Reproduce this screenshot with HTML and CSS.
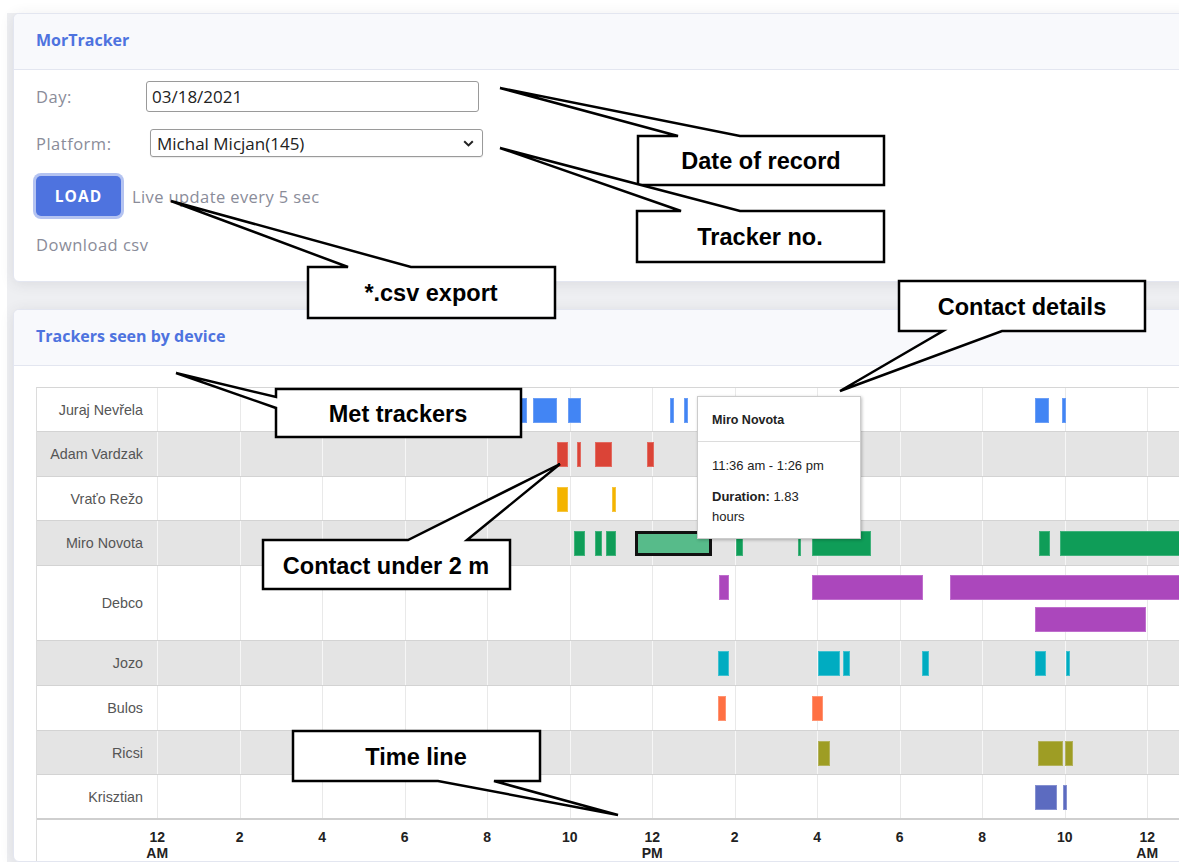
FILE: index.html
```html
<!DOCTYPE html>
<html lang="en">
<head>
<meta charset="utf-8">
<title>MorTracker</title>
<link rel="stylesheet" href="styles.css">
</head>
<body>
<div class="page">
  <section class="card">
    <header class="card-head"><h6 class="card-title">MorTracker</h6></header>
    <div class="card-body form">
      <div class="field">
        <label class="field-label">Day:</label>
        <div class="date-input">03/18/2021</div>
      </div>
      <div class="field">
        <label class="field-label">Platform:</label>
        <div class="select">
          <span>Michal Micjan(145)</span>
          <svg class="chevron" width="11" height="7" viewBox="0 0 11 7"><polyline points="1.2,1.2 5.5,5.4 9.8,1.2" fill="none" stroke="#222" stroke-width="2"/></svg>
        </div>
      </div>
      <div class="actions">
        <button class="btn-load">LOAD</button>
        <span class="hint">Live update every 5 sec</span>
      </div>
      <a class="download">Download csv</a>
    </div>
  </section>

  <section class="card">
    <header class="card-head"><h6 class="card-title">Trackers seen by device</h6></header>
    <div class="card-body chart-body">
      <div class="timeline">
        <div class="row short">
          <div class="lbl">Juraj Nevřela</div>
          <div class="track c-blue">
            <i class="bar" style="left:358px;width:12px"></i>
            <i class="bar" style="left:376px;width:24px"></i>
            <i class="bar" style="left:411px;width:13px"></i>
            <i class="bar" style="left:513px;width:4px"></i>
            <i class="bar" style="left:527px;width:4px"></i>
            <i class="bar" style="left:878px;width:14px"></i>
            <i class="bar" style="left:905px;width:4px"></i>
          </div>
        </div>
        <div class="row alt">
          <div class="lbl">Adam Vardzak</div>
          <div class="track c-red">
            <i class="bar" style="left:400px;width:11px"></i>
            <i class="bar" style="left:420px;width:4px"></i>
            <i class="bar" style="left:438px;width:17px"></i>
            <i class="bar" style="left:490px;width:7px"></i>
          </div>
        </div>
        <div class="row short">
          <div class="lbl">Vraťo Režo</div>
          <div class="track c-yellow">
            <i class="bar" style="left:400px;width:11px"></i>
            <i class="bar" style="left:455px;width:4px"></i>
          </div>
        </div>
        <div class="row alt">
          <div class="lbl">Miro Novota</div>
          <div class="track c-green">
            <i class="bar" style="left:417px;width:11px"></i>
            <i class="bar" style="left:438px;width:7px"></i>
            <i class="bar" style="left:449px;width:10px"></i>
            <i class="bar selected" style="left:478px;width:77px"></i>
            <i class="bar" style="left:579px;width:7px"></i>
            <i class="bar" style="left:641px;width:3px"></i>
            <i class="bar" style="left:655px;width:59px"></i>
            <i class="bar" style="left:882px;width:11px"></i>
            <i class="bar" style="left:903px;width:160px"></i>
          </div>
        </div>
        <div class="row tall">
          <div class="lbl">Debco</div>
          <div class="track c-purple">
            <i class="bar lane1" style="left:562px;width:10px"></i>
            <i class="bar lane1" style="left:655px;width:111px"></i>
            <i class="bar lane1" style="left:793px;width:260px"></i>
            <i class="bar lane2" style="left:878px;width:111px"></i>
          </div>
        </div>
        <div class="row alt">
          <div class="lbl">Jozo</div>
          <div class="track c-teal">
            <i class="bar" style="left:561px;width:11px"></i>
            <i class="bar" style="left:661px;width:22px"></i>
            <i class="bar" style="left:686px;width:7px"></i>
            <i class="bar" style="left:765px;width:7px"></i>
            <i class="bar" style="left:878px;width:11px"></i>
            <i class="bar" style="left:909px;width:4px"></i>
          </div>
        </div>
        <div class="row">
          <div class="lbl">Bulos</div>
          <div class="track c-orange">
            <i class="bar" style="left:561px;width:8px"></i>
            <i class="bar" style="left:655px;width:11px"></i>
          </div>
        </div>
        <div class="row alt short">
          <div class="lbl">Ricsi</div>
          <div class="track c-olive">
            <i class="bar" style="left:661px;width:12px"></i>
            <i class="bar" style="left:881px;width:25px"></i>
            <i class="bar" style="left:908px;width:8px"></i>
          </div>
        </div>
        <div class="row last">
          <div class="lbl">Krisztian</div>
          <div class="track c-indigo">
            <i class="bar" style="left:878px;width:22px"></i>
            <i class="bar" style="left:906px;width:4px"></i>
          </div>
        </div>

        <div class="axis">
          <span class="tick">12<br>AM</span>
          <span class="tick">2</span>
          <span class="tick">4</span>
          <span class="tick">6</span>
          <span class="tick">8</span>
          <span class="tick">10</span>
          <span class="tick">12<br>PM</span>
          <span class="tick">2</span>
          <span class="tick">4</span>
          <span class="tick">6</span>
          <span class="tick">8</span>
          <span class="tick">10</span>
          <span class="tick">12<br>AM</span>
        </div>

        <div class="tooltip">
          <div class="tip-head">Miro Novota</div>
          <div class="tip-body">
            <p class="tip-time">11:36 am - 1:26 pm</p>
            <p class="tip-dur"><b>Duration:</b> 1.83 hours</p>
          </div>
        </div>
      </div>
    </div>
  </section>
</div>

<svg class="callouts" width="1179" height="862" viewBox="0 0 1179 862">
  <g class="callout">
    <path d="M678,136 L500,88 L740,136 L884,136 L884,185 L638,185 L638,136 Z"/>
    <text x="761" y="161">Date of record</text>
  </g>
  <g class="callout">
    <path d="M681,211 L500,148 L740,211 L884,211 L884,262 L637,262 L637,211 Z"/>
    <text x="760" y="237">Tracker no.</text>
  </g>
  <g class="callout">
    <path d="M348,267 L171,201 L411,267 L555,267 L555,318 L308,318 L308,267 Z"/>
    <text x="431" y="293">*.csv export</text>
  </g>
  <g class="callout">
    <path d="M899,281 L1145,281 L1145,331 L1002,331 L840,391 L943,331 L899,331 Z"/>
    <text x="1022" y="307">Contact details</text>
  </g>
  <g class="callout">
    <path d="M276,389 L521,389 L521,437 L276,437 L276,408 L176,373 L276,397 Z"/>
    <text x="398" y="414">Met trackers</text>
  </g>
  <g class="callout">
    <path d="M263,540 L408,540 L560,464 L467,540 L510,540 L510,589 L263,589 Z"/>
    <text x="386" y="566">Contact under 2 m</text>
  </g>
  <g class="callout">
    <path d="M293,731 L540,731 L540,781 L494,781 L618,815 L438,781 L293,781 Z"/>
    <text x="416" y="757">Time line</text>
  </g>
</svg>
</body>
</html>
```

FILE: styles.css
```css
html, body {
  margin: 0;
  padding: 0;
}

body {
  background: #ffffff;
  width: 1179px;
  height: 862px;
  overflow: hidden;
  position: relative;
  font-family: "Open Sans", "Noto Sans", sans-serif;
}

.page {
  margin: 13px 0 0 7px;
  padding: 0 0 40px 6px;
  width: 1260px;
  background: #eeeff2;
}

/* cards */
.card {
  background: #fff;
  border: 1px solid #e3e6f0;
  border-radius: 6px;
  box-shadow: 0 2px 14px rgba(58, 59, 69, 0.10);
  margin-bottom: 27px;
  overflow: hidden;
}

.card-head {
  height: 55px;
  box-sizing: border-box;
  background: #f8f9fc;
  border-bottom: 1px solid #e3e6f0;
  display: flex;
  align-items: center;
  padding: 0 22px 3px;
  height: 56px;
}

.card-title {
  margin: 0;
  font-size: 16px;
  font-weight: 700;
  color: #4e73df;
}

/* form */
.form {
  padding: 11px 22px 26px;
  display: flex;
  flex-direction: column;
  align-items: flex-start;
}

.field {
  display: flex;
  align-items: center;
}

.field + .field {
  margin-top: 17px;
}

.field-label {
  width: 110px;
  font-size: 16.5px;
  letter-spacing: 0.5px;
  color: #8a8c99;
}

.date-input {
  width: 326px;
  height: 29px;
  border: 1.5px solid #9a9a9a;
  border-radius: 3px;
  padding-left: 5px;
  font-size: 17px;
  color: #222;
  display: flex;
  align-items: center;
}

.select {
  margin-left: 4px;
  width: 319px;
  height: 26px;
  border: 1px solid #9a9a9a;
  border-radius: 3px;
  padding: 0 6px;
  font-size: 17px;
  color: #222;
  display: flex;
  align-items: center;
  justify-content: space-between;
  box-shadow: 0 1px 1px rgba(0,0,0,0.08);
}

.chevron {
  margin-right: 2px;
}

.actions {
  margin-top: 19px;
  display: flex;
  align-items: center;
}

.btn-load {
  width: 85px;
  height: 40px;
  border: none;
  border-radius: 5px;
  background: #4e73df;
  color: #fff;
  font-family: "Open Sans", sans-serif;
  font-size: 15.5px;
  font-weight: 700;
  letter-spacing: 1px;
  box-shadow: 0 0 0 3px #b4c3f1;
  padding: 0;
}

.hint {
  margin-left: 11px;
  font-size: 16.5px;
  letter-spacing: 0.4px;
  color: #8a8c99;
}

.download {
  margin-top: 19px;
  line-height: 20px;
  font-size: 16.5px;
  letter-spacing: 0.5px;
  color: #8a8c99;
}

/* timeline chart */
.chart-body {
  padding: 21px 0 0 22px;
}

.timeline {
  position: relative;
  border-top: 1px solid #d6d6d6;
  border-left: 1px solid #dcdcdc;
  font-family: "Liberation Sans", Arial, sans-serif;
}

.row {
  display: flex;
  height: 45px;
  border-bottom: 1px solid #d3d3d3;
  box-sizing: border-box;
  background: #fff;
}

.row.short {
  height: 44px;
}

.row.alt {
  background: #e4e4e4;
}

.row.tall {
  height: 75px;
}

.row.last {
  border-bottom: 2px solid #cfcfcf;
}

.lbl {
  width: 120px;
  flex: none;
  box-sizing: border-box;
  padding-right: 14px;
  display: flex;
  align-items: center;
  justify-content: flex-end;
  font-size: 14.3px;
  color: #555;
}

.track {
  position: relative;
  flex: 1;
  background-image: repeating-linear-gradient(90deg, #e9e9e9 0 1px, transparent 1px 82.5px);
}

.row.alt .track {
  background-image: repeating-linear-gradient(90deg, #f6f6f6 0 1px, transparent 1px 82.5px);
}

.bar {
  position: absolute;
  top: 9.5px;
  height: 25px;
  box-sizing: border-box;
}

.bar.lane1 { top: 9px; }
.bar.lane2 { top: 41px; }

.c-blue .bar   { background: #4285f4; border: 1px solid #6b9ef6; }
.c-red .bar    { background: #db4437; border: 1px solid #e26a60; }
.c-yellow .bar { background: #f4b400; border: 1px solid #f6c540; }
.c-green .bar  { background: #0f9d58; border: 1px solid #3fb17a; }
.c-purple .bar { background: #ab47bc; border: 1px solid #bf6ecd; }
.c-teal .bar   { background: #00acc1; border: 1px solid #40c1d0; }
.c-orange .bar { background: #ff7043; border: 1px solid #ff9472; }
.c-olive .bar  { background: #9e9d24; border: 1px solid #b3b25b; }
.c-indigo .bar { background: #5c6bc0; border: 1px solid #8590d0; }

.c-green .bar.selected {
  background: #57bb8a;
  border: 3px solid #111;
}

.axis {
  display: flex;
  padding: 9px 0 0 79px;
}

.tick {
  width: 82.5px;
  flex: none;
  text-align: center;
  font-size: 14px;
  font-weight: 700;
  line-height: 16px;
  color: #222;
}

.tooltip {
  position: absolute;
  left: 660px;
  top: 8px;
  width: 162px;
  height: 141px;
  background: #fff;
  border: 1px solid #cccccc;
  box-shadow: 1px 1px 3px rgba(0, 0, 0, 0.25);
  font-family: "Liberation Sans", Arial, sans-serif;
  font-size: 13px;
  color: #222;
}

.tip-head {
  height: 45px;
  box-sizing: border-box;
  padding: 2px 14px 0;
  display: flex;
  align-items: center;
  font-weight: 700;
  font-size: 12.5px;
  border-bottom: 1px solid #dcdcdc;
}

.tip-body {
  padding: 14px 14px 0;
}

.tip-time {
  margin: 0;
  line-height: 20px;
}

.tip-dur {
  margin: 11px 0 0;
  width: 110px;
  line-height: 20px;
}

/* annotation layer */
.callouts {
  position: absolute;
  left: 0;
  top: 0;
  pointer-events: none;
}

.callout path {
  fill: #fff;
  stroke: #000;
  stroke-width: 2.5;
  stroke-linejoin: miter;
}

.callout text {
  font-family: "Liberation Sans", Arial, sans-serif;
  font-weight: 700;
  font-size: 23.5px;
  fill: #000;
  text-anchor: middle;
  dominant-baseline: central;
}
```
